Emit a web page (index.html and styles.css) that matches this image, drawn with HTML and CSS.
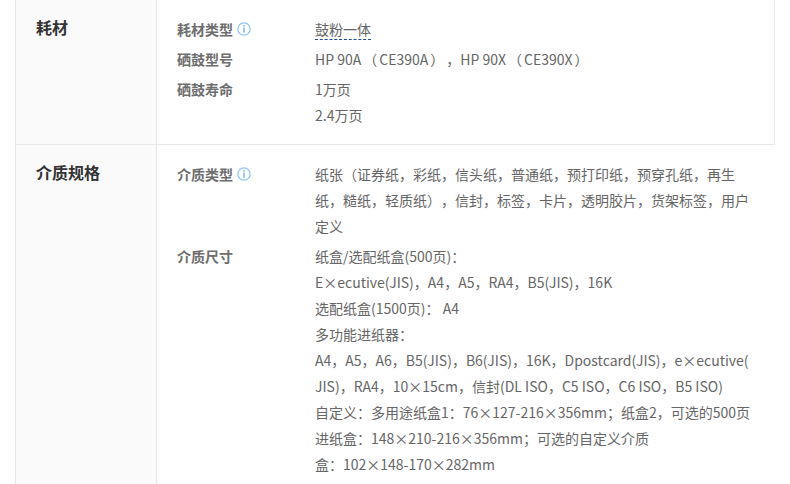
FILE: index.html
```html
<!DOCTYPE html>
<html lang="zh-CN">
<head>
<meta charset="utf-8">
<title>耗材与介质规格</title>
<link rel="stylesheet" href="styles.css">
</head>
<body>
<div class="spec">
  <section class="group group-first">
    <h2 class="group-title">耗材</h2>
    <div class="group-body">
      <div class="item item-a">
        <div class="label">耗材类型<svg class="info" viewBox="0 0 14 14"><circle cx="7" cy="7" r="6.2"/><rect x="6.3" y="3" width="1.4" height="1.6"/><rect x="6.3" y="5.6" width="1.4" height="5.2"/></svg></div>
        <div class="value"><span class="dashed">鼓粉一体</span></div>
      </div>
      <div class="item item-b">
        <div class="label">硒鼓型号</div>
        <div class="value">HP 90A<span class="bracket">（</span>CE390A<span class="bracket">）</span>，HP 90X<span class="bracket">（</span>CE390X<span class="bracket">）</span></div>
      </div>
      <div class="item item-c">
        <div class="label">硒鼓寿命</div>
        <div class="value">1万页<br>2.4万页</div>
      </div>
    </div>
  </section>
  <section class="group group-second">
    <h2 class="group-title">介质规格</h2>
    <div class="group-body">
      <div class="item">
        <div class="label">介质类型<svg class="info" viewBox="0 0 14 14"><circle cx="7" cy="7" r="6.2"/><rect x="6.3" y="3" width="1.4" height="1.6"/><rect x="6.3" y="5.6" width="1.4" height="5.2"/></svg></div>
        <div class="value">纸张（证券纸，彩纸，信头纸，普通纸，预打印纸，预穿孔纸，再生纸，糙纸，轻质纸），信封，标签，卡片，透明胶片，货架标签，用户定义</div>
      </div>
      <div class="item item-d">
        <div class="label">介质尺寸</div>
        <div class="value">纸盒/选配纸盒(500页)：<br>E×ecutive(JIS)，A4，A5，RA4，B5(JIS)，16K<br>选配纸盒(1500页)： A4<br>多功能进纸器：<br>A4，A5，A6，B5(JIS)，B6(JIS)，16K，Dpostcard(JIS)，e×ecutive(<br>JIS)，RA4，10×15cm，信封(DL ISO，C5 ISO，C6 ISO，B5 ISO)<br>自定义：多用途纸盒1：76×127-216×356mm；纸盒2，可选的500页<br>进纸盒：148×210-216×356mm；可选的自定义介质<br>盒：102×148-170×282mm</div>
      </div>
    </div>
  </section>
</div>
</body>
</html>
```

FILE: styles.css
```css
html, body {
  margin: 0;
  padding: 0;
  height: 484px;
  overflow: hidden;
  background: #fff;
}
body {
  font-family: "Noto Sans CJK SC", "Open Sans", sans-serif;
  font-size: 14px;
  color: #666;
  text-spacing-trim: space-all;
}
.spec {
  margin-left: 15px;
  width: 760px;
  height: 484px;
  overflow: hidden;
  box-sizing: border-box;
  border-left: 1px solid #e8e8e8;
}
.group {
  display: flex;
}
.group-first {
  height: 145px;
  box-sizing: border-box;
  border-right: 1px solid #e8e8e8;
  border-bottom: 1px solid #e8e8e8;
}
.group-second {
  height: 339px;
}
.group-title {
  flex: none;
  box-sizing: border-box;
  width: 141px;
  margin: 0;
  padding: 14px 0 0 20px;
  background: #fafafa;
  border-right: 1px solid #e8e8e8;
  font-size: 16px;
  line-height: 26px;
  font-weight: 700;
  color: #333;
}
.group-body {
  flex: 1;
  padding-top: 16px;
}
.item {
  display: flex;
  line-height: 26px;
}
.item-b { margin-top: 4px; }
.item-c { margin-top: 4px; }
.item-d { margin-top: 4px; }
.label {
  flex: none;
  width: 158px;
  padding-left: 20px;
  box-sizing: border-box;
  font-size: 14px;
  font-weight: 700;
  color: #6e6e6e;
  display: flex;
  align-items: flex-start;
  gap: 4px;
}
.value {
  width: 440px;
  word-break: break-all;
}
.bracket {
  margin: 0 2px;
}
.dashed {
  display: inline-block;
  line-height: 20px;
  border-bottom: 1px dashed #1d4e8f;
}
.info {
  width: 14px;
  height: 14px;
  margin-top: 6px;
  fill: #6db3f2;
}
.info circle {
  fill: none;
  stroke: #8cc4f5;
  stroke-width: 1.2;
}
```
